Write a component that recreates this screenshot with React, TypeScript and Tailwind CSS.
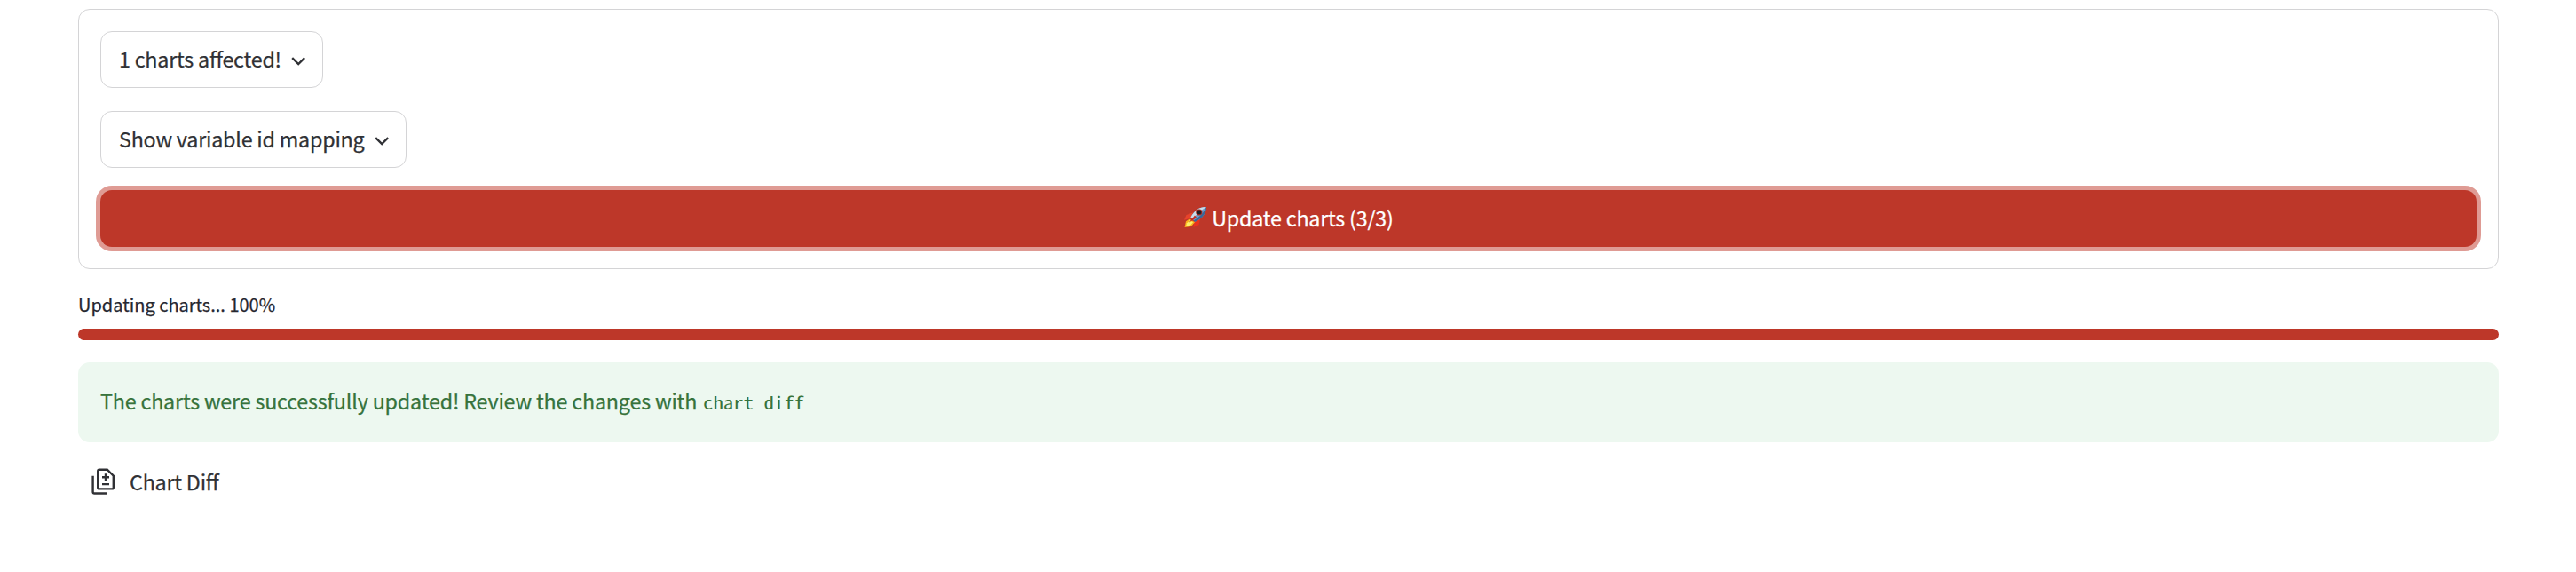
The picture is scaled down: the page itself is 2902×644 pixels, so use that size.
import { type ReactNode } from "react";

function Chevron() {
  return (
    <svg className="ml-auto mr-[19px] mt-[4px] h-[10px] w-[16px]" viewBox="0 0 16 10" fill="none" stroke="#303135" strokeWidth="2.4">
      <path d="M1.2 1.1 8.2 8 15.2 1.1" />
    </svg>
  );
}

function Rocket() {
  return (
    <svg className="-mt-[3px] mr-[5px] h-[25px] w-[27px] shrink-0" viewBox="0 0 27 26" preserveAspectRatio="none">
      <path d="M11 7.5 3.5 10.5 1 16.5 9 14Z" fill="#e8432c" />
      <path d="M19 15 17.5 22 11.5 25 12.5 17Z" fill="#e8321e" />
      <path d="M7 15 3 18 1.5 25 9 24 13 19Z" fill="#f9b21c" />
      <path d="M7.5 17 4 20 3 24 8 22.5 11 19Z" fill="#fdf06a" />
      <path d="M26 1C19 .6 12.5 4.5 8.5 13L13 18.5C21 15 26 9 26 1Z" fill="#6d9bc8" />
      <path d="M26 1C19 .6 13 4.5 8.5 13L10.5 15.5C15 9 20 5 26 1Z" fill="#c9dcea" />
      <path d="M26 1C26 9 21 15 13 18.5L11.7 16.9C19 12.5 23 7.5 26 1Z" fill="#3b6696" />
      <circle cx="17.8" cy="7.3" r="3.6" fill="#a3241b" />
      <circle cx="18" cy="7.2" r="2.4" fill="#1d1c22" />
      <path d="M13 11 6.5 19.5 15 13.5Z" fill="#c8281d" />
    </svg>
  );
}

function DifferenceIcon() {
  return (
    <svg className="-mt-[3px] h-[30px] w-[27px] shrink-0" viewBox="0 0 27 30" fill="none" stroke="#303135" strokeWidth="2.4">
      <path d="M8.9 1.7H17.8L24.8 8.7V21.7Q24.8 23.4 23.1 23.4H8.9Q7.2 23.4 7.2 21.7V3.4Q7.2 1.7 8.9 1.7Z" />
      <path d="M1.6 8.7V26.8Q1.6 28.5 3.3 28.5H18" />
      <path d="M16 6.3V14.3M12 10.3H20M12 18.1H20" />
    </svg>
  );
}

function Label({ children, className = "" }: { children: ReactNode; className?: string }) {
  return <span className={`whitespace-nowrap pb-[2px] ${className}`}>{children}</span>;
}

export default function App() {
  return (
    <div className="h-[644px] w-[2902px] bg-white pl-[88px] pr-[87px] pt-[10px] font-['Noto_Sans_CJK_SC',sans-serif] text-[23.3px] leading-[32px] tracking-[-0.22px] text-[#303135] [font-feature-settings:'liga'_1] [-webkit-text-stroke:0.25px_currentColor]">
      <section className="flex h-[293px] flex-col items-start rounded-[13px] border border-[#d4d4d6] px-6 pt-6">
        <button className="flex h-[64px] w-[251px] items-center rounded-[13px] border border-[#d4d4d6] pl-[20px]">
          <Label>1 charts affected!</Label>
          <Chevron />
        </button>
        <button className="mt-[26px] flex h-[64px] w-[345px] items-center rounded-[13px] border border-[#d4d4d6] pl-[20px]">
          <Label>Show variable id mapping</Label>
          <Chevron />
        </button>
        <button className="mt-[25px] flex h-[64px] w-full items-center justify-center rounded-[13px] bg-[#bd3729] text-white shadow-[0_0_0_5px_#df9b94]">
          <Rocket />
          <Label>Update charts (3/3)</Label>
        </button>
      </section>
      <div className="mt-[24px] h-[32px] text-[20px] tracking-normal text-[#262730]">
        <span>Updating charts... 100%</span>
      </div>
      <div className="mt-[11px] h-[13px] rounded-full bg-[#bd3729]" />
      <div className="mt-[25px] flex h-[90px] items-center rounded-[13px] bg-[#edf8f0] pl-[25px] text-[#37733c]">
        <p className="flex items-baseline whitespace-nowrap pb-[2px] tracking-[-0.19px]">
          The charts were successfully updated! Review the changes with
          <code className="ml-[7px] inline-block origin-left scale-x-120 whitespace-pre font-['Noto_Sans_Mono_CJK_SC','Liberation_Mono',monospace] text-[19px] tracking-normal [-webkit-text-stroke:0px]">chart diff</code>
        </p>
      </div>
      <a className="mt-[29px] flex h-[32px] items-center pl-[15px]">
        <DifferenceIcon />
        <Label className="ml-[16px]">Chart Diff</Label>
      </a>
    </div>
  );
}
